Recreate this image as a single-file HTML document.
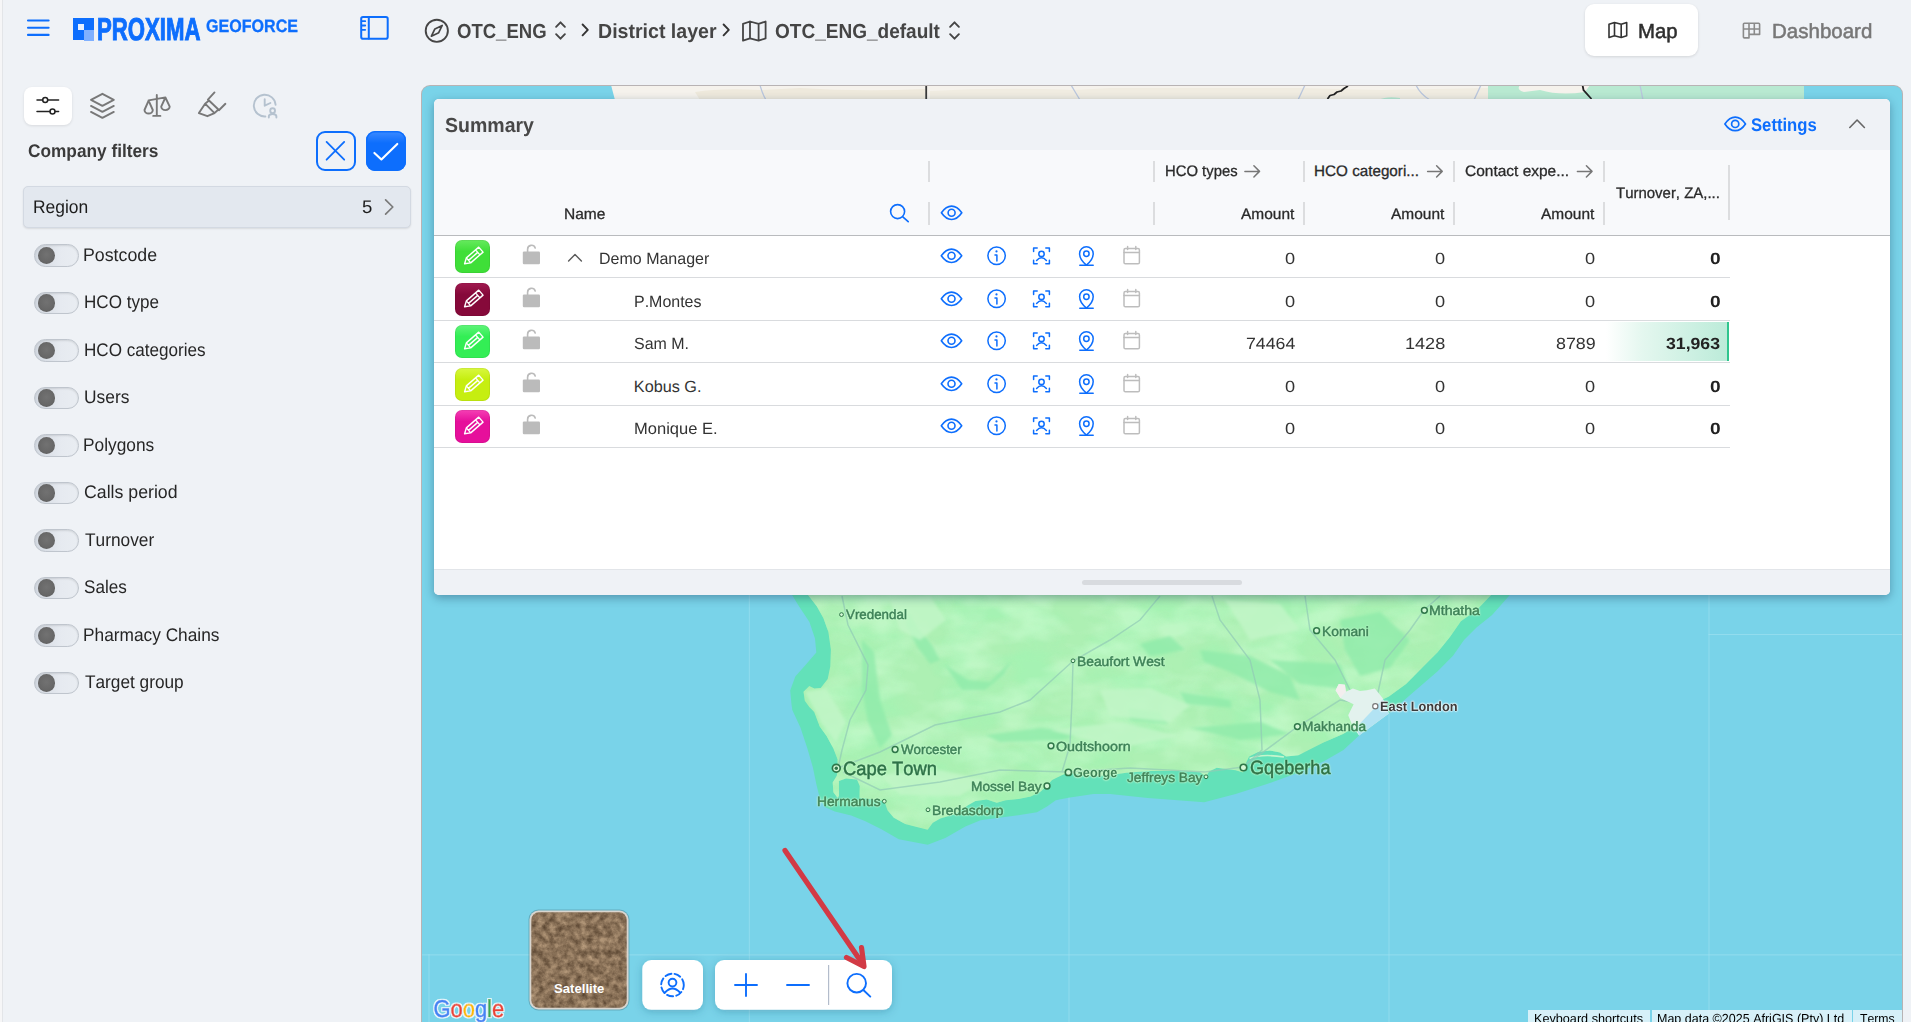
<!DOCTYPE html>
<html lang="en"><head><meta charset="utf-8"><title>Proxima GeoForce</title>
<style>
html,body{margin:0;padding:0}
body{width:1911px;height:1022px;overflow:hidden;background:#eff2f6;font-family:"Liberation Sans",sans-serif;position:relative;color:#333}
.t{position:absolute;white-space:nowrap;line-height:0;color:#333;text-rendering:geometricPrecision;font-kerning:none;transform-origin:0 0}
.t::before{content:"";display:inline-block;width:0;height:100px}
.a{position:absolute}
svg{position:absolute;left:0;top:0;overflow:visible}
</style></head><body>

<div class="a" style="left:0;top:0;width:2px;height:1022px;background:#f6f6f7"></div>
<div class="a" style="left:2px;top:0;width:1px;height:1022px;background:#e3e5e8"></div>
<!-- header -->
<div class="a" style="left:73px;top:18.4px;width:21.2px;height:22.1px;background:#0d6efd"></div>
<div class="a" style="left:78.2px;top:24px;width:5.7px;height:5.6px;background:#e9f1ff"></div>
<div class="a" style="left:83.9px;top:30px;width:10.3px;height:10.5px;background:#7fb0ff"></div>
<div class="t" style="left:96.87px;top:-60px;font-size:31.70px;font-weight:700;transform:scaleX(0.7001);color:#0d6efd;-webkit-text-stroke:1.00px;">PROXIMA</div>
<div class="t" style="left:205.88px;top:-68px;font-size:17.90px;font-weight:700;transform:scaleX(0.8983);color:#0d6efd;-webkit-text-stroke:0.30px;">GEOFORCE</div>
<div class="t" style="left:456.74px;top:-62px;font-size:20.29px;font-weight:700;transform:scaleX(0.9136);color:#454545;">OTC_ENG</div>
<div class="t" style="left:597.89px;top:-62px;font-size:20.29px;font-weight:700;transform:scaleX(0.9648);color:#454545;">District layer</div>
<div class="t" style="left:774.62px;top:-62px;font-size:20.29px;font-weight:700;transform:scaleX(0.9382);color:#454545;">OTC_ENG_default</div>
<div class="a" style="left:1585px;top:4px;width:113px;height:52px;background:#fff;border-radius:9px;box-shadow:0 1px 3px rgba(0,0,0,.12)"></div>
<div class="t" style="left:1638.18px;top:-62px;font-size:20.29px;transform:scaleX(1.0039);color:#2e2e2e;-webkit-text-stroke:0.50px;">Map</div>
<div class="t" style="left:1772.07px;top:-62px;font-size:20.29px;transform:scaleX(1.0115);color:#777;-webkit-text-stroke:0.50px;">Dashboard</div>
<!-- left panel -->
<div class="a" style="left:24px;top:86.5px;width:48px;height:38.5px;background:#fff;border-radius:8px;box-shadow:0 1px 3px rgba(0,0,0,.10)"></div>
<div class="t" style="left:28.19px;top:57px;font-size:18.26px;font-weight:700;transform:scaleX(0.9457);color:#3a3a3a;">Company filters</div>
<div class="a" style="left:316px;top:131px;width:36px;height:36px;border:2px solid #0d6efd;border-radius:9px"></div>
<div class="a" style="left:366px;top:131px;width:40px;height:40px;background:linear-gradient(#3d8bff 0,#0d6efd 30%);border-radius:9px;box-shadow:inset 0 0 0 1.5px #0d6efd"></div>
<div class="a" style="left:23px;top:186px;width:388px;height:42.4px;background:#e3e8ef;border:1px solid #d3d9e2;border-radius:5px;box-sizing:border-box;box-shadow:0 1px 2px rgba(0,0,0,.10)"></div>
<div class="t" style="left:33.17px;top:113px;font-size:18.26px;transform:scaleX(0.9549);color:#1c1c1c;">Region</div>
<div class="t" style="left:361.66px;top:113px;font-size:18.26px;transform:scaleX(1.0164);color:#1c1c1c;">5</div>
<div class="a" style="left:34.2px;top:244.2px;width:44.7px;height:22.4px;border-radius:11.2px;box-sizing:border-box;border:1px solid #bfc5cd;background:linear-gradient(90deg,#d3d9e1 0,#e6eaf0 60%,#e9edf2 100%);box-shadow:inset 0 1px 2px rgba(0,0,0,.10)"></div>
<div class="a" style="left:37.9px;top:246.7px;width:17.4px;height:17.4px;border-radius:9px;background:radial-gradient(circle at 50% 45%,#727272 0,#676767 60%,#555 100%)"></div>
<div class="t" style="left:83.44px;top:161px;font-size:18.26px;transform:scaleX(0.9725);color:#262626;">Postcode</div>
<div class="a" style="left:34.2px;top:291.7px;width:44.7px;height:22.4px;border-radius:11.2px;box-sizing:border-box;border:1px solid #bfc5cd;background:linear-gradient(90deg,#d3d9e1 0,#e6eaf0 60%,#e9edf2 100%);box-shadow:inset 0 1px 2px rgba(0,0,0,.10)"></div>
<div class="a" style="left:37.9px;top:294.2px;width:17.4px;height:17.4px;border-radius:9px;background:radial-gradient(circle at 50% 45%,#727272 0,#676767 60%,#555 100%)"></div>
<div class="t" style="left:83.50px;top:208px;font-size:18.26px;transform:scaleX(0.9350);color:#262626;">HCO type</div>
<div class="a" style="left:34.2px;top:339.2px;width:44.7px;height:22.4px;border-radius:11.2px;box-sizing:border-box;border:1px solid #bfc5cd;background:linear-gradient(90deg,#d3d9e1 0,#e6eaf0 60%,#e9edf2 100%);box-shadow:inset 0 1px 2px rgba(0,0,0,.10)"></div>
<div class="a" style="left:37.9px;top:341.7px;width:17.4px;height:17.4px;border-radius:9px;background:radial-gradient(circle at 50% 45%,#727272 0,#676767 60%,#555 100%)"></div>
<div class="t" style="left:83.50px;top:256px;font-size:18.26px;transform:scaleX(0.9370);color:#262626;">HCO categories</div>
<div class="a" style="left:34.2px;top:386.7px;width:44.7px;height:22.4px;border-radius:11.2px;box-sizing:border-box;border:1px solid #bfc5cd;background:linear-gradient(90deg,#d3d9e1 0,#e6eaf0 60%,#e9edf2 100%);box-shadow:inset 0 1px 2px rgba(0,0,0,.10)"></div>
<div class="a" style="left:37.9px;top:389.2px;width:17.4px;height:17.4px;border-radius:9px;background:radial-gradient(circle at 50% 45%,#727272 0,#676767 60%,#555 100%)"></div>
<div class="t" style="left:83.56px;top:303px;font-size:18.26px;transform:scaleX(0.9514);color:#262626;">Users</div>
<div class="a" style="left:34.2px;top:434.2px;width:44.7px;height:22.4px;border-radius:11.2px;box-sizing:border-box;border:1px solid #bfc5cd;background:linear-gradient(90deg,#d3d9e1 0,#e6eaf0 60%,#e9edf2 100%);box-shadow:inset 0 1px 2px rgba(0,0,0,.10)"></div>
<div class="a" style="left:37.9px;top:436.7px;width:17.4px;height:17.4px;border-radius:9px;background:radial-gradient(circle at 50% 45%,#727272 0,#676767 60%,#555 100%)"></div>
<div class="t" style="left:83.48px;top:351px;font-size:18.26px;transform:scaleX(0.9484);color:#262626;">Polygons</div>
<div class="a" style="left:34.2px;top:481.7px;width:44.7px;height:22.4px;border-radius:11.2px;box-sizing:border-box;border:1px solid #bfc5cd;background:linear-gradient(90deg,#d3d9e1 0,#e6eaf0 60%,#e9edf2 100%);box-shadow:inset 0 1px 2px rgba(0,0,0,.10)"></div>
<div class="a" style="left:37.9px;top:484.2px;width:17.4px;height:17.4px;border-radius:9px;background:radial-gradient(circle at 50% 45%,#727272 0,#676767 60%,#555 100%)"></div>
<div class="t" style="left:84.00px;top:398px;font-size:18.26px;transform:scaleX(0.9711);color:#262626;">Calls period</div>
<div class="a" style="left:34.2px;top:529.2px;width:44.7px;height:22.4px;border-radius:11.2px;box-sizing:border-box;border:1px solid #bfc5cd;background:linear-gradient(90deg,#d3d9e1 0,#e6eaf0 60%,#e9edf2 100%);box-shadow:inset 0 1px 2px rgba(0,0,0,.10)"></div>
<div class="a" style="left:37.9px;top:531.7px;width:17.4px;height:17.4px;border-radius:9px;background:radial-gradient(circle at 50% 45%,#727272 0,#676767 60%,#555 100%)"></div>
<div class="t" style="left:84.51px;top:446px;font-size:18.26px;transform:scaleX(0.9467);color:#262626;">Turnover</div>
<div class="a" style="left:34.2px;top:576.7px;width:44.7px;height:22.4px;border-radius:11.2px;box-sizing:border-box;border:1px solid #bfc5cd;background:linear-gradient(90deg,#d3d9e1 0,#e6eaf0 60%,#e9edf2 100%);box-shadow:inset 0 1px 2px rgba(0,0,0,.10)"></div>
<div class="a" style="left:37.9px;top:579.2px;width:17.4px;height:17.4px;border-radius:9px;background:radial-gradient(circle at 50% 45%,#727272 0,#676767 60%,#555 100%)"></div>
<div class="t" style="left:84.12px;top:493px;font-size:18.26px;transform:scaleX(0.9368);color:#262626;">Sales</div>
<div class="a" style="left:34.2px;top:624.2px;width:44.7px;height:22.4px;border-radius:11.2px;box-sizing:border-box;border:1px solid #bfc5cd;background:linear-gradient(90deg,#d3d9e1 0,#e6eaf0 60%,#e9edf2 100%);box-shadow:inset 0 1px 2px rgba(0,0,0,.10)"></div>
<div class="a" style="left:37.9px;top:626.7px;width:17.4px;height:17.4px;border-radius:9px;background:radial-gradient(circle at 50% 45%,#727272 0,#676767 60%,#555 100%)"></div>
<div class="t" style="left:83.48px;top:541px;font-size:18.26px;transform:scaleX(0.9474);color:#262626;">Pharmacy Chains</div>
<div class="a" style="left:34.2px;top:671.7px;width:44.7px;height:22.4px;border-radius:11.2px;box-sizing:border-box;border:1px solid #bfc5cd;background:linear-gradient(90deg,#d3d9e1 0,#e6eaf0 60%,#e9edf2 100%);box-shadow:inset 0 1px 2px rgba(0,0,0,.10)"></div>
<div class="a" style="left:37.9px;top:674.2px;width:17.4px;height:17.4px;border-radius:9px;background:radial-gradient(circle at 50% 45%,#727272 0,#676767 60%,#555 100%)"></div>
<div class="t" style="left:84.51px;top:588px;font-size:18.26px;transform:scaleX(0.9441);color:#262626;">Target group</div><!-- map -->
<div class="a" style="left:422px;top:86px;width:1480px;height:936px;border-radius:8px 8px 0 0;overflow:hidden;background:#79d3e9;box-shadow:0 0 0 1px #b8b3b4">
<svg width="1480" height="936" viewBox="422 86 1480 936">
<defs><filter id="sat" x="0" y="0" width="100%" height="100%" color-interpolation-filters="sRGB"><feTurbulence type="fractalNoise" baseFrequency="0.16" numOctaves="4" seed="7"/><feColorMatrix type="matrix" values="0.5 0 0 0 0.29  0.46 0 0 0 0.215  0.4 0 0 0 0.145  0 0 0 0 1"/></filter></defs>
<rect x="428.5" y="954.0" width="1" height="68.0" fill="#a4e2f1" opacity=".6"/>
<rect x="748.8" y="595.0" width="1" height="427.0" fill="#a4e2f1" opacity=".6"/>
<rect x="1068.5" y="790.0" width="1" height="232.0" fill="#a4e2f1" opacity=".6"/>
<rect x="1388.5" y="712.0" width="1" height="310.0" fill="#a4e2f1" opacity=".6"/>
<rect x="1708.5" y="595.0" width="1" height="427.0" fill="#a4e2f1" opacity=".6"/>
<rect x="1708.5" y="634.0" width="194.5" height="1" fill="#a4e2f1" opacity=".6"/>
<rect x="421.0" y="954.4" width="1482.0" height="1" fill="#a4e2f1" opacity=".6"/>
<polygon points="611,85 1804,85 1804,100 615,100" fill="#f5f2ec"/>
<path d="M695 92 Q720 88 760 90 L800 88 Q860 92 925 89 L925 100 L700 100 Z" fill="#eee9dc"/>
<path d="M930 91 Q1000 87 1075 90 L1110 88 L1300 88 L1380 90 L1488 88 L1488 100 L930 100 Z" fill="#f0ece1"/>
<path d="M1488 85 L1520 85 Q1516 90 1524 92 L1540 90 Q1560 96 1585 92 L1590 85 L1804 85 L1804 100 L1488 100 Z" fill="#b8e9d1"/>
<path d="M1379 100 Q1386 96 1400 98 L1400 100 Z" fill="#b8e9d1"/>
<g fill="none" stroke="#b9c6dd" stroke-width="1.3"><path d="M760 85 Q762 93 766 100"/><path d="M1071 85 L1080 100"/><path d="M1305 85 L1298 100"/><path d="M1416 85 Q1420 94 1430 100"/><path d="M1481 85 L1474 100"/><path d="M1640 85 L1643 100"/></g>
<rect x="925.3" y="85" width="1.8" height="15" fill="#3a3a3a"/>
<path d="M1582.5 85 L1583.5 90 L1591.5 99" stroke="#222" stroke-width="1.8" fill="none"/>
<path d="M1327.5 99 L1330 95.5 L1334 94.5 L1337 92 L1341 91 L1344 88.5 L1348 86" stroke="#222" stroke-width="1.8" fill="none" stroke-linejoin="round"/>
<polygon points="786.0,586.0 792.1,595.1 799.1,606.5 809.3,621.8 815.0,638.4 816.3,652.4 805.5,665.1 795.3,676.5 790.2,690.5 791.5,704.5 792.3,710.0 800.5,727.8 807.4,748.4 812.9,767.5 816.3,784.0 819.7,797.7 825.2,807.3 834.8,811.4 851.2,815.5 864.9,821.0 881.4,829.2 898.8,839.2 927.7,844.8 945.3,837.9 965.4,826.6 980.5,820.3 999.3,817.8 1018.2,815.3 1037.0,812.2 1047.0,806.5 1055.8,800.2 1068.4,797.7 1093.5,794.0 1110.0,794.1 1147.7,797.9 1204.2,802.3 1235.6,794.1 1267.0,784.1 1298.4,772.7 1323.5,761.4 1343.5,750.0 1359.1,735.5 1388.9,713.6 1413.9,691.7 1437.4,671.4 1453.0,655.7 1464.0,640.1 1476.5,627.6 1492.1,615.0 1509.4,595.5 1517.0,586.0" fill="#63e1b9"/>
<polygon points="802.0,586.0 808.0,595.1 816.9,606.5 823.3,618.0 828.4,632.0 830.9,649.8 830.3,666.4 827.7,679.1 820.7,688.0 814.4,688.6 809.3,686.1 803.5,691.8 804.8,700.7 809.3,707.1 814.2,712.0 819.7,726.4 826.6,736.0 833.4,748.4 837.5,759.3 837.6,770.0 836.8,775.8 832.7,782.6 833.4,792.2 837.5,797.7 839.0,796.0 838.9,781.0 846.0,778.6 857.0,779.4 859.8,786.0 859.5,797.7 872.0,799.5 884.4,801.3 887.5,810.3 893.8,817.8 905.1,824.1 927.7,829.7 932.8,822.8 940.3,818.4 955.4,814.0 967.9,805.3 975.4,800.9 986.8,799.6 996.8,802.7 1005.6,800.2 1018.2,799.0 1030.7,796.5 1040.8,791.4 1047.0,785.8 1052.0,780.1 1062.1,775.1 1068.4,772.6 1080.0,774.5 1093.5,776.0 1110.0,775.3 1126.3,772.7 1150.0,771.0 1180.0,771.0 1200.0,772.2 1206.0,776.6 1209.0,771.5 1216.8,767.7 1235.6,770.2 1243.1,772.5 1246.0,763.0 1249.0,756.5 1258.0,752.0 1270.0,750.5 1280.0,752.5 1286.0,756.6 1298.4,755.2 1323.5,742.6 1343.0,734.0 1359.1,724.6 1382.6,699.5 1388.9,696.4 1406.1,683.9 1421.7,668.2 1437.4,652.6 1449.9,636.9 1460.9,621.3 1476.5,610.3 1490.6,595.5 1498.0,586.0" fill="#adf0b3"/>
<path d="M1249.5 758.5 Q1262 753.5 1284 757" stroke="#c4f5cc" stroke-width="1.6" fill="none"/>
<clipPath id="landclip"><polygon points="802.0,586.0 808.0,595.1 816.9,606.5 823.3,618.0 828.4,632.0 830.9,649.8 830.3,666.4 827.7,679.1 820.7,688.0 814.4,688.6 809.3,686.1 803.5,691.8 804.8,700.7 809.3,707.1 814.2,712.0 819.7,726.4 826.6,736.0 833.4,748.4 837.5,759.3 837.6,770.0 836.8,775.8 832.7,782.6 833.4,792.2 837.5,797.7 839.0,796.0 838.9,781.0 846.0,778.6 857.0,779.4 859.8,786.0 859.5,797.7 872.0,799.5 884.4,801.3 887.5,810.3 893.8,817.8 905.1,824.1 927.7,829.7 932.8,822.8 940.3,818.4 955.4,814.0 967.9,805.3 975.4,800.9 986.8,799.6 996.8,802.7 1005.6,800.2 1018.2,799.0 1030.7,796.5 1040.8,791.4 1047.0,785.8 1052.0,780.1 1062.1,775.1 1068.4,772.6 1080.0,774.5 1093.5,776.0 1110.0,775.3 1126.3,772.7 1150.0,771.0 1180.0,771.0 1200.0,772.2 1206.0,776.6 1209.0,771.5 1216.8,767.7 1235.6,770.2 1243.1,772.5 1246.0,763.0 1249.0,756.5 1258.0,752.0 1270.0,750.5 1280.0,752.5 1286.0,756.6 1298.4,755.2 1323.5,742.6 1343.0,734.0 1359.1,724.6 1382.6,699.5 1388.9,696.4 1406.1,683.9 1421.7,668.2 1437.4,652.6 1449.9,636.9 1460.9,621.3 1476.5,610.3 1490.6,595.5 1498.0,586.0"/></clipPath>
<filter id="terr" x="0" y="0" width="100%" height="100%" color-interpolation-filters="sRGB"><feTurbulence type="fractalNoise" baseFrequency="0.018 0.032" numOctaves="3" seed="11"/><feColorMatrix type="matrix" values="0 0 0 0 0.62  0 0 0 0 0.96  0 0 0 0 0.70  2.6 0 0 0 -0.95"/></filter>
<filter id="terr2" x="0" y="0" width="100%" height="100%" color-interpolation-filters="sRGB"><feTurbulence type="fractalNoise" baseFrequency="0.02 0.036" numOctaves="3" seed="29"/><feColorMatrix type="matrix" values="0 0 0 0 0.80  0 0 0 0 0.99  0 0 0 0 0.82  2.6 0 0 0 -1.0"/></filter>
<g clip-path="url(#landclip)"><rect x="780" y="586" width="740" height="270" filter="url(#terr)" opacity=".55"/><rect x="780" y="586" width="740" height="270" filter="url(#terr2)" opacity=".6"/></g>
<filter id="bl" x="-10%" y="-10%" width="120%" height="120%"><feGaussianBlur stdDeviation="1.6"/></filter>
<g clip-path="url(#landclip)"><g filter="url(#bl)">
<g fill="#8fecaa" opacity=".8"><path d="M908 610 L918 628 L932 645 L940 660 L930 664 L918 648 L906 626 Z"/><path d="M944 664 L968 680 L990 682 L1012 660 L1004 674 L985 690 L962 690 Z"/><path d="M862 640 L874 652 L880 700 L892 735 L880 748 L868 722 L862 690 Z"/><path d="M985 735 L1040 728 L1090 732 L1060 740 L1000 742 Z"/><path d="M1128 708 L1160 712 L1168 724 L1130 720 Z"/><path d="M1180 692 L1230 700 L1232 708 L1186 704 Z"/><path d="M1200 650 L1250 656 L1290 676 L1300 700 L1270 692 L1230 672 L1204 662 Z"/><path d="M1140 644 L1170 636 L1185 650 L1150 656 Z"/><path d="M1270 660 L1340 664 L1350 690 L1300 684 Z"/><path d="M1190 728 L1260 722 L1290 734 L1240 740 Z"/><path d="M1340 620 L1380 612 L1410 640 L1390 668 L1360 676 L1345 650 Z"/></g>
<g fill="#c4f7c8" opacity=".8"><path d="M805 692 L826 688 L834 702 L846 722 L836 742 L822 724 Z"/><path d="M880 775 L940 770 L985 780 L960 796 L900 795 Z"/><path d="M1100 690 L1150 688 L1190 705 L1170 722 L1110 716 Z"/><path d="M1050 730 L1120 722 L1180 736 L1120 748 Z"/><path d="M890 600 L930 596 L946 620 L920 640 L900 630 Z"/><path d="M1225 600 L1280 604 L1300 630 L1250 640 Z"/></g>
</g></g>
<g fill="none" stroke="#92cbb6" stroke-width="1.5" opacity=".7">
<path d="M842 596 L848 625 L868 665 L866 690 L850 720 L842 750 L838 768"/>
<path d="M838 768 L880 752 L935 725 L1000 712 L1030 700 L1073 661 L1110 640 L1140 620 L1160 596"/>
<path d="M1073 661 L1072 700 L1070 745 L1062 772"/>
<path d="M843 772 L880 790 L940 782 L1000 770 L1068 772 L1130 768 L1205 772 L1243 767"/>
<path d="M1243 767 L1262 750 L1260 700 L1250 660 L1220 620 L1212 596"/>
<path d="M1243 767 L1297 727 L1340 700 L1375 706"/>
<path d="M1305 596 L1310 630 L1335 660 L1350 690 L1375 706"/>
<path d="M1375 706 L1385 660 L1410 630 L1424 610 L1440 596"/>
</g>
<path d="M1335.6 690.2 L1338.8 683.9 L1345 684.7 L1345.8 691.7 L1352.9 688.6 L1360 691 L1366.9 690.2 L1374.8 688.6 L1382.6 698 L1388.9 713.6 L1359.1 735.5 L1353 727 L1348.2 715.2 L1353.6 704.2 L1346.6 701.1 L1340.3 698 Z" fill="#e3f2ee"/>
<path d="M1382.6 699.5 L1388.9 713.6 L1359.1 735.5 L1356.5 727.5 L1359.1 724.6 Z" fill="#b2e3f3"/>
<path d="M1335.6 690.2 L1338.8 683.9 L1345 684.7 L1345.8 691.7 L1340.3 698 Z" fill="#f3eeee"/>
<circle cx="841.5" cy="614.6" r="1.9" fill="#d3f8d6" stroke="#2f7649" stroke-width="1.0"/>
<circle cx="1073.0" cy="660.8" r="1.9" fill="#d3f8d6" stroke="#2f7649" stroke-width="1.0"/>
<circle cx="895.1" cy="749.5" r="2.9" fill="#d3f8d6" stroke="#2f7649" stroke-width="1.5"/>
<circle cx="836.3" cy="768.2" r="3.9" fill="#d3f8d6" stroke="#2f7649" stroke-width="1.7"/>
<circle cx="836.3" cy="768.2" r="1.7" fill="#2f7649"/>
<circle cx="884.3" cy="801.3" r="1.9" fill="#d3f8d6" stroke="#2f7649" stroke-width="1.0"/>
<circle cx="928.0" cy="809.8" r="1.9" fill="#d3f8d6" stroke="#2f7649" stroke-width="1.0"/>
<circle cx="1047.0" cy="786.0" r="2.9" fill="#d3f8d6" stroke="#2f7649" stroke-width="1.5"/>
<circle cx="1051.0" cy="745.8" r="2.9" fill="#d3f8d6" stroke="#2f7649" stroke-width="1.5"/>
<circle cx="1068.4" cy="772.4" r="3.1" fill="#d3f8d6" stroke="#2f7649" stroke-width="1.6"/>
<circle cx="1206.0" cy="776.8" r="1.9" fill="#d3f8d6" stroke="#2f7649" stroke-width="1.0"/>
<circle cx="1243.5" cy="767.5" r="3.3" fill="#d3f8d6" stroke="#2f7649" stroke-width="1.6"/>
<circle cx="1297.4" cy="726.6" r="2.9" fill="#d3f8d6" stroke="#2f7649" stroke-width="1.5"/>
<circle cx="1375.3" cy="706.2" r="2.6" fill="#fff" stroke="#777" stroke-width="1.2"/>
<circle cx="1316.6" cy="630.7" r="2.9" fill="#d3f8d6" stroke="#2f7649" stroke-width="1.5"/>
<circle cx="1424.4" cy="610.3" r="2.9" fill="#d3f8d6" stroke="#2f7649" stroke-width="1.5"/>
<rect x="528.5" y="909.5" width="101" height="101" rx="10" fill="#000" opacity=".18"/>
<rect x="529.5" y="910.5" width="99" height="99" rx="9" fill="#d9d6d0"/>
<g><clipPath id="sc"><rect x="531.3" y="912.3" width="95.4" height="95.4" rx="7.5"/></clipPath><rect clip-path="url(#sc)" x="531" y="912" width="96" height="96" filter="url(#sat)"/></g>
<text x="579.2" y="993" text-anchor="middle" font-size="13.6" font-weight="700" fill="#fff" textLength="50.2" lengthAdjust="spacingAndGlyphs" style="font-family:'Liberation Sans',sans-serif">Satellite</text>
<filter id="sh" x="-30%" y="-30%" width="160%" height="170%"><feDropShadow dx="0" dy="2" stdDeviation="4" flood-color="#1a4a6a" flood-opacity=".28"/></filter>
<rect x="642.3" y="960" width="60.7" height="49.8" rx="9" fill="#fff" filter="url(#sh)"/>
<rect x="715" y="960" width="177" height="49.8" rx="9" fill="#fff" filter="url(#sh)"/>
<rect x="828" y="965" width="1.2" height="40" fill="#b3bccb"/>
<g fill="none" stroke="#0d6efd" stroke-width="1.9" stroke-linecap="round">
<path d="M735 985 H757 M746 974 V996"/><path d="M787 985 H809"/>
<circle cx="856.7" cy="983.2" r="9.3"/><path d="M863.6 990.2 L870.3 996.6"/>
<circle cx="672.5" cy="985" r="11.3" stroke-dasharray="6.3 3.2" stroke-dashoffset="2"/>
<circle cx="672.5" cy="982.6" r="3.9"/><path d="M665 992.5 Q672.5 984.5 680 992.5"/>
</g>
<g fill="none" stroke="#d23a45" stroke-width="5.2" stroke-linecap="round" stroke-linejoin="round"><path d="M785 850.5 L862 963"/><path d="M846.5 957.5 L864 966.5 L861.5 947.5"/></g>
<linearGradient id="gg" gradientUnits="userSpaceOnUse" x1="433.4" y1="0" x2="504.2" y2="0"><stop offset="0.0000" stop-color="#4285f4"/><stop offset="0.2413" stop-color="#4285f4"/><stop offset="0.2413" stop-color="#ea4335"/><stop offset="0.4138" stop-color="#ea4335"/><stop offset="0.4138" stop-color="#fbbc05"/><stop offset="0.5862" stop-color="#fbbc05"/><stop offset="0.5862" stop-color="#4285f4"/><stop offset="0.7587" stop-color="#4285f4"/><stop offset="0.7587" stop-color="#34a853"/><stop offset="0.8275" stop-color="#34a853"/><stop offset="0.8275" stop-color="#ea4335"/><stop offset="1.0000" stop-color="#ea4335"/></linearGradient>
<filter id="gh" x="-5%" y="-20%" width="110%" height="140%"><feMorphology in="SourceAlpha" operator="dilate" radius="1.1" result="d"/><feGaussianBlur in="d" stdDeviation=".4" result="b"/><feFlood flood-color="#fff" flood-opacity=".85"/><feComposite in2="b" operator="in" result="h"/><feMerge><feMergeNode in="h"/><feMergeNode in="SourceGraphic"/></feMerge></filter>
<text x="433.4" y="1017" font-size="24.3" textLength="70.8" lengthAdjust="spacingAndGlyphs" fill="url(#gg)" stroke="url(#gg)" stroke-width=".6" filter="url(#gh)" text-rendering="geometricPrecision" style="font-family:'Liberation Sans',sans-serif">Google</text>
</svg>
<div class="t" style="left:424.37px;top:433px;font-size:13.40px;transform:scaleX(0.9969);color:#3d8257;-webkit-text-stroke:0.45px;text-shadow:0 0 1.2px #c9f8cf,0 0 1.2px #c9f8cf,0 0 2px #c9f8cf,0 0 2.5px #c9f8cf;">Vredendal</div>
<div class="t" style="left:654.50px;top:480px;font-size:13.40px;transform:scaleX(1.0326);color:#3d8257;-webkit-text-stroke:0.45px;text-shadow:0 0 1.2px #c9f8cf,0 0 1.2px #c9f8cf,0 0 2px #c9f8cf,0 0 2.5px #c9f8cf;">Beaufort West</div>
<div class="t" style="left:479.27px;top:568px;font-size:13.40px;transform:scaleX(0.9948);color:#3d8257;-webkit-text-stroke:0.45px;text-shadow:0 0 1.2px #c9f8cf,0 0 1.2px #c9f8cf,0 0 2px #c9f8cf,0 0 2.5px #c9f8cf;">Worcester</div>
<div class="t" style="left:420.81px;top:589px;font-size:19.20px;transform:scaleX(0.9579);color:#2d7247;-webkit-text-stroke:0.50px;text-shadow:0 0 1.2px #c9f8cf,0 0 1.2px #c9f8cf,0 0 2px #c9f8cf,0 0 2.5px #c9f8cf;">Cape Town</div>
<div class="t" style="left:394.90px;top:620px;font-size:13.40px;transform:scaleX(1.0284);color:#3d8257;-webkit-text-stroke:0.45px;text-shadow:0 0 1.2px #c9f8cf,0 0 1.2px #c9f8cf,0 0 2px #c9f8cf,0 0 2.5px #c9f8cf;">Hermanus</div>
<div class="t" style="left:509.50px;top:629px;font-size:13.40px;transform:scaleX(1.0299);color:#3d8257;-webkit-text-stroke:0.45px;text-shadow:0 0 1.2px #c9f8cf,0 0 1.2px #c9f8cf,0 0 2px #c9f8cf,0 0 2.5px #c9f8cf;">Bredasdorp</div>
<div class="t" style="left:549.11px;top:605px;font-size:13.40px;transform:scaleX(1.0207);color:#3d8257;-webkit-text-stroke:0.45px;text-shadow:0 0 1.2px #c9f8cf,0 0 1.2px #c9f8cf,0 0 2px #c9f8cf,0 0 2.5px #c9f8cf;">Mossel Bay</div>
<div class="t" style="left:634.36px;top:565px;font-size:13.40px;transform:scaleX(1.0657);color:#3d8257;-webkit-text-stroke:0.45px;text-shadow:0 0 1.2px #c9f8cf,0 0 1.2px #c9f8cf,0 0 2px #c9f8cf,0 0 2.5px #c9f8cf;">Oudtshoorn</div>
<div class="t" style="left:651.18px;top:591px;font-size:13.40px;font-weight:700;transform:scaleX(0.9476);color:#3d8257;text-shadow:0 0 1.2px #c9f8cf,0 0 1.2px #c9f8cf,0 0 2px #c9f8cf,0 0 2.5px #c9f8cf;">George</div>
<div class="t" style="left:704.62px;top:596px;font-size:13.40px;transform:scaleX(1.0238);color:#3d8257;-webkit-text-stroke:0.45px;text-shadow:0 0 1.2px #c9f8cf,0 0 1.2px #c9f8cf,0 0 2px #c9f8cf,0 0 2.5px #c9f8cf;">Jeffreys Bay</div>
<div class="t" style="left:827.53px;top:588px;font-size:19.20px;transform:scaleX(0.9431);color:#2d7247;-webkit-text-stroke:0.50px;text-shadow:0 0 1.2px #c9f8cf,0 0 1.2px #c9f8cf,0 0 2px #c9f8cf,0 0 2.5px #c9f8cf;">Gqeberha</div>
<div class="t" style="left:880.30px;top:545px;font-size:13.40px;transform:scaleX(1.0238);color:#3d8257;-webkit-text-stroke:0.45px;text-shadow:0 0 1.2px #c9f8cf,0 0 1.2px #c9f8cf,0 0 2px #c9f8cf,0 0 2.5px #c9f8cf;">Makhanda</div>
<div class="t" style="left:958.14px;top:525px;font-size:13.40px;font-weight:700;transform:scaleX(0.9570);color:#3c3c3c;text-shadow:0 0 1.2px #ffffff,0 0 1.2px #ffffff,0 0 2px #ffffff,0 0 2.5px #ffffff;">East London</div>
<div class="t" style="left:899.80px;top:450px;font-size:13.40px;transform:scaleX(1.0323);color:#3d8257;-webkit-text-stroke:0.45px;text-shadow:0 0 1.2px #c9f8cf,0 0 1.2px #c9f8cf,0 0 2px #c9f8cf,0 0 2.5px #c9f8cf;">Komani</div>
<div class="t" style="left:1006.98px;top:429px;font-size:13.40px;transform:scaleX(1.0530);color:#3d8257;-webkit-text-stroke:0.45px;text-shadow:0 0 1.2px #c9f8cf,0 0 1.2px #c9f8cf,0 0 2px #c9f8cf,0 0 2.5px #c9f8cf;">Mthatha</div>
<div class="a" style="left:1106.0px;top:924px;height:12px;width:122.0px;background:rgba(245,250,252,.75)"></div>
<div class="a" style="left:1230.0px;top:924px;height:12px;width:199.6px;background:rgba(245,250,252,.75)"></div>
<div class="a" style="left:1431.0px;top:924px;height:12px;width:49.0px;background:rgba(245,250,252,.75)"></div>
<div class="t" style="left:1111.76px;top:837px;font-size:13.20px;transform:scaleX(0.9593);color:#000;">Keyboard shortcuts</div>
<div class="t" style="left:1235.47px;top:837px;font-size:13.20px;transform:scaleX(0.9483);color:#000;">Map data ©2025 AfriGIS (Pty) Ltd</div>
<div class="t" style="left:1437.72px;top:837px;font-size:13.20px;transform:scaleX(0.9284);color:#000;">Terms</div>
</div><!-- summary panel -->
<div class="a" style="left:434px;top:99px;width:1456px;height:496px;border-radius:5px;background:#fff;box-shadow:0 3px 10px rgba(20,50,80,.38);overflow:hidden">
<div class="a" style="left:0;top:0;width:1456px;height:51px;background:#eff2f6"></div>
<div class="a" style="left:0;top:51px;width:1456px;height:85px;background:#f8f9fb;border-bottom:1.5px solid #b9bbbe"></div>
<div class="a" style="left:0;top:470px;width:1456px;height:26px;background:#eff2f6;border-top:1px solid #e2e5e9"></div>
<div class="a" style="left:648px;top:481px;width:159.5px;height:5px;border-radius:3px;background:#d8dbdf"></div>
<div class="a" style="left:0;top:178.0px;width:1296px;height:1px;background:#d9dbde"></div>
<div class="a" style="left:0;top:220.5px;width:1296px;height:1px;background:#d9dbde"></div>
<div class="a" style="left:0;top:263.0px;width:1296px;height:1px;background:#d9dbde"></div>
<div class="a" style="left:0;top:305.5px;width:1296px;height:1px;background:#d9dbde"></div>
<div class="a" style="left:0;top:348.0px;width:1296px;height:1px;background:#d9dbde"></div>
<div class="a" style="left:1172px;top:223px;width:123px;height:38.5px;background:linear-gradient(90deg,#ffffff 0,#e4f7ef 30%,#bcebd9 100%);border-right:2px solid #30c58e;box-sizing:border-box"></div>
<div class="a" style="left:494.2px;top:61.6px;width:1.6px;height:21.4px;background:#dcdddf"></div>
<div class="a" style="left:494.2px;top:103.3px;width:1.6px;height:22.3px;background:#dcdddf"></div>
<div class="a" style="left:719.2px;top:61.6px;width:1.6px;height:21.4px;background:#dcdddf"></div>
<div class="a" style="left:719.2px;top:103.3px;width:1.6px;height:22.3px;background:#dcdddf"></div>
<div class="a" style="left:869.2px;top:61.6px;width:1.6px;height:21.4px;background:#dcdddf"></div>
<div class="a" style="left:869.2px;top:103.3px;width:1.6px;height:22.3px;background:#dcdddf"></div>
<div class="a" style="left:1019.2px;top:61.6px;width:1.6px;height:21.4px;background:#dcdddf"></div>
<div class="a" style="left:1019.2px;top:103.3px;width:1.6px;height:22.3px;background:#dcdddf"></div>
<div class="a" style="left:1169.2px;top:61.6px;width:1.6px;height:21.4px;background:#dcdddf"></div>
<div class="a" style="left:1169.2px;top:103.3px;width:1.6px;height:22.3px;background:#dcdddf"></div>
<div class="a" style="left:1294.2px;top:66.0px;width:1.6px;height:54.6px;background:#dcdddf"></div>
<div class="a" style="left:21px;top:140.9px;width:35px;height:33px;border-radius:7px;background:linear-gradient(#66ea5e 0,#3fdf38 35%);box-shadow:inset 0 0 0 1px rgba(0,0,0,.06)"></div>
<div class="a" style="left:21px;top:183.9px;width:35px;height:33px;border-radius:7px;background:linear-gradient(#a11a50 0,#86093a 35%);box-shadow:inset 0 0 0 1px rgba(0,0,0,.06)"></div>
<div class="a" style="left:21px;top:225.9px;width:35px;height:33px;border-radius:7px;background:linear-gradient(#60f47a 0,#33ee55 35%);box-shadow:inset 0 0 0 1px rgba(0,0,0,.06)"></div>
<div class="a" style="left:21px;top:268.9px;width:35px;height:33px;border-radius:7px;background:linear-gradient(#d8f840 0,#c6ee10 35%);box-shadow:inset 0 0 0 1px rgba(0,0,0,.06)"></div>
<div class="a" style="left:21px;top:310.9px;width:35px;height:33px;border-radius:7px;background:linear-gradient(#f53fb4 0,#e60f9b 35%);box-shadow:inset 0 0 0 1px rgba(0,0,0,.06)"></div>
</div>
<div class="t" style="left:445.14px;top:32px;font-size:20.29px;font-weight:700;transform:scaleX(0.9620);color:#484848;">Summary</div>
<div class="t" style="left:1751.22px;top:31px;font-size:18.26px;font-weight:700;transform:scaleX(0.9129);color:#0d6efd;">Settings</div>
<div class="t" style="left:564.48px;top:119px;font-size:15.22px;transform:scaleX(1.0213);color:#2a2a2a;-webkit-text-stroke:0.30px;">Name</div>
<div class="t" style="left:1164.53px;top:76px;font-size:15.22px;transform:scaleX(0.9750);color:#2a2a2a;-webkit-text-stroke:0.30px;">HCO types</div>
<div class="t" style="left:1314.10px;top:76px;font-size:15.22px;color:#2a2a2a;-webkit-text-stroke:0.30px;">HCO categori...</div>
<div class="t" style="left:1464.77px;top:76px;font-size:15.22px;transform:scaleX(1.0170);color:#2a2a2a;-webkit-text-stroke:0.30px;">Contact expe...</div>
<div class="t" style="left:1615.61px;top:98px;font-size:15.22px;transform:scaleX(0.9830);color:#2a2a2a;-webkit-text-stroke:0.30px;">Turnover, ZA,...</div>
<div class="t" style="left:1241.12px;top:119px;font-size:15.22px;transform:scaleX(1.0170);color:#2a2a2a;-webkit-text-stroke:0.30px;">Amount</div>
<div class="t" style="left:1391.12px;top:119px;font-size:15.22px;transform:scaleX(1.0170);color:#2a2a2a;-webkit-text-stroke:0.30px;">Amount</div>
<div class="t" style="left:1541.12px;top:119px;font-size:15.22px;transform:scaleX(1.0170);color:#2a2a2a;-webkit-text-stroke:0.30px;">Amount</div>
<div class="t" style="left:599.49px;top:164px;font-size:16.23px;transform:scaleX(0.9866);color:#333;">Demo Manager</div>
<div class="t" style="left:1285.09px;top:164px;font-size:16.23px;transform:scaleX(1.1212);color:#333;">0</div>
<div class="t" style="left:1435.09px;top:164px;font-size:16.23px;transform:scaleX(1.1212);color:#333;">0</div>
<div class="t" style="left:1585.29px;top:164px;font-size:16.23px;transform:scaleX(1.1212);color:#333;">0</div>
<div class="t" style="left:1709.94px;top:164px;font-size:16.23px;font-weight:700;transform:scaleX(1.1788);color:#222;">0</div>
<div class="t" style="left:633.89px;top:207px;font-size:16.23px;transform:scaleX(0.9842);color:#333;">P.Montes</div>
<div class="t" style="left:1285.09px;top:207px;font-size:16.23px;transform:scaleX(1.1212);color:#333;">0</div>
<div class="t" style="left:1435.09px;top:207px;font-size:16.23px;transform:scaleX(1.1212);color:#333;">0</div>
<div class="t" style="left:1585.29px;top:207px;font-size:16.23px;transform:scaleX(1.1212);color:#333;">0</div>
<div class="t" style="left:1709.94px;top:207px;font-size:16.23px;font-weight:700;transform:scaleX(1.1788);color:#222;">0</div>
<div class="t" style="left:634.48px;top:249px;font-size:16.23px;transform:scaleX(0.9833);color:#333;">Sam M.</div>
<div class="t" style="left:1245.69px;top:249px;font-size:16.23px;transform:scaleX(1.0928);color:#333;">74464</div>
<div class="t" style="left:1405.02px;top:249px;font-size:16.23px;transform:scaleX(1.1150);color:#333;">1428</div>
<div class="t" style="left:1555.82px;top:249px;font-size:16.23px;transform:scaleX(1.1000);color:#333;">8789</div>
<div class="t" style="left:1666.39px;top:249px;font-size:16.23px;font-weight:700;transform:scaleX(1.0885);color:#222;">31,963</div>
<div class="t" style="left:633.87px;top:292px;font-size:16.23px;color:#333;">Kobus G.</div>
<div class="t" style="left:1285.09px;top:292px;font-size:16.23px;transform:scaleX(1.1212);color:#333;">0</div>
<div class="t" style="left:1435.09px;top:292px;font-size:16.23px;transform:scaleX(1.1212);color:#333;">0</div>
<div class="t" style="left:1585.29px;top:292px;font-size:16.23px;transform:scaleX(1.1212);color:#333;">0</div>
<div class="t" style="left:1709.94px;top:292px;font-size:16.23px;font-weight:700;transform:scaleX(1.1788);color:#222;">0</div>
<div class="t" style="left:633.84px;top:334px;font-size:16.23px;transform:scaleX(1.0189);color:#333;">Monique E.</div>
<div class="t" style="left:1285.09px;top:334px;font-size:16.23px;transform:scaleX(1.1212);color:#333;">0</div>
<div class="t" style="left:1435.09px;top:334px;font-size:16.23px;transform:scaleX(1.1212);color:#333;">0</div>
<div class="t" style="left:1585.29px;top:334px;font-size:16.23px;transform:scaleX(1.1212);color:#333;">0</div>
<div class="t" style="left:1709.94px;top:334px;font-size:16.23px;font-weight:700;transform:scaleX(1.1788);color:#222;">0</div><!-- icons overlay -->
<svg width="1911" height="1022" viewBox="0 0 1911 1022" fill="none" stroke-linecap="round" stroke-linejoin="round">
<g stroke="#0d6efd" stroke-width="2.1"><path d="M28 20.5 H48.6 M28 27.7 H48.6 M28 34.9 H48.6"/></g>
<g stroke="#0d6efd" stroke-width="2"><rect x="361.2" y="16.9" width="26.5" height="21.8" rx="1.8"/><path d="M368.8 17 V38.6"/><path d="M362.2 21.2 H365.2 M362.2 25.5 H365.2 M362.2 29.8 H365.2" stroke-width="1.8"/></g>
<g stroke="#454545" stroke-width="1.9"><circle cx="436.8" cy="30.8" r="11.1"/><path d="M431.4 36.2 L434.9 28.9 L442.2 25.4 L438.7 32.7 Z" stroke-width="1.7"/></g>
<g stroke="#454545" stroke-width="1.9"><path d="M556.1 26.8 L560.5 22.3 L564.9 26.8 M556.1 34.2 L560.5 38.7 L564.9 34.2"/></g>
<g stroke="#454545" stroke-width="1.9"><path d="M950.1 26.8 L954.5 22.3 L958.9 26.8 M950.1 34.2 L954.5 38.7 L958.9 34.2"/></g>
<path stroke="#333" stroke-width="1.9" d="M582.6 24.5 L587.8 29.9 L582.6 35.3"/>
<path stroke="#333" stroke-width="1.9" d="M723.6 24.5 L728.8 29.9 L723.6 35.3"/>
<path stroke="#454545" stroke-width="1.8" d="M743.0 23.8 L750.0 21.5 L758.6 23.8 L765.6 21.5 V38.4 L758.6 40.7 L750.0 38.4 L743.0 40.7 Z M750.0 21.5 V38.4 M758.6 23.8 V40.7"/>
<path stroke="#333" stroke-width="1.6" d="M1609.0 24.3 L1614.5 22.5 L1621.2 24.3 L1626.7 22.5 V35.7 L1621.2 37.5 L1614.5 35.7 L1609.0 37.5 Z M1614.5 22.5 V35.7 M1621.2 24.3 V37.5"/>
<g stroke="#8a8a8a" stroke-width="1.6"><path d="M1743.4 24.2 a1 1 0 0 1 1 -1 H1758.6 a1 1 0 0 1 1 1 V34.4 H1749 V37.9 H1744.4 a1 1 0 0 1 -1 -1 Z M1749 23.4 V34.4 M1754.3 23.4 V34.4 M1743.4 29 H1759.6"/></g>
<g stroke="#222" stroke-width="1.5"><path d="M37 100.1 H42.6 M47.8 100.1 H58.6 M37 111.5 H49.9 M55.1 111.5 H58.6"/><circle cx="45.2" cy="100.1" r="2.5"/><circle cx="52.5" cy="111.5" r="2.5"/></g>
<g stroke="#787878" stroke-width="1.9"><path d="M102.4 93.8 L113.8 99.8 L102.4 105.8 L91 99.8 Z M91 105.9 L102.4 111.9 L113.8 105.9 M91 111.9 L102.4 117.9 L113.8 111.9"/>
<path d="M156.8 95 V115.8 M153.2 115.9 H160.4 M148.6 100.4 L165.4 97.4 M148.6 100.6 L144.5 110 a4.15 3.5 0 0 0 8.3 0 Z M165.4 97.5 L161.2 106.6 a4.25 3.5 0 0 0 8.5 0 Z"/>
<path d="M214.5 92.4 L207.9 99.6 M209 100.5 L218.4 109.5 L214.5 113.1 L205.1 103.7 Z M205.1 103.7 L198.9 113.1 L207.4 116.2 L214.5 113.1 M218.9 110.2 L225.4 103.8"/></g>
<g stroke="#b5c2cf" stroke-width="1.9"><path d="M265.4 116.5 A10.9 10.9 0 1 1 275.6 104.8"/><path d="M264.7 99.2 V105.7 L270.4 103"/><circle cx="272.6" cy="110.7" r="2.4"/><path d="M268.8 117.5 V116.6 a3.8 2.6 0 0 1 7.6 0 V117.5"/></g>
<path stroke="#0d6efd" stroke-width="1.8" d="M326.6 141.9 L344.2 159.7 M344.2 141.9 L326.6 159.7"/>
<path stroke="#fff" stroke-width="2.1" d="M374.4 152.9 L381.4 159.5 L397.3 143.9"/>
<path stroke="#7a7a7a" stroke-width="1.7" d="M385.6 199.8 L392.8 207 L385.6 214.2"/>
<g stroke="#0d6efd" stroke-width="1.7"><path d="M1724.9 123.9 Q1729.5 117.1 1735.2 117.1 Q1740.9 117.1 1745.5 123.9 Q1740.9 130.7 1735.2 130.7 Q1729.5 130.7 1724.9 123.9 Z"/><circle cx="1735.2" cy="123.9" r="3.6"/></g>
<path stroke="#666" stroke-width="1.6" d="M1849.8 127.5 L1857.1 120 L1864.4 127.5"/>
<g stroke="#0d6efd" stroke-width="1.6"><circle cx="897.6" cy="211.6" r="7"/><path d="M902.8 216.8 L908.2 221.6"/></g>
<g stroke="#0d6efd" stroke-width="1.6"><path d="M941.4 212.8 Q946.0 206.1 951.6 206.1 Q957.2 206.1 961.8 212.8 Q957.2 219.5 951.6 219.5 Q946.0 219.5 941.4 212.8 Z"/><circle cx="951.6" cy="212.8" r="3.5"/></g>
<path stroke="#777" stroke-width="1.5" d="M1244.9 171.4 H1259.5 M1253.9 165.8 L1259.5 171.4 L1253.9 177"/>
<path stroke="#777" stroke-width="1.5" d="M1427.6 171.4 H1442.2 M1436.6 165.8 L1442.2 171.4 L1436.6 177"/>
<path stroke="#777" stroke-width="1.5" d="M1577.4 171.4 H1592.0 M1586.4 165.8 L1592.0 171.4 L1586.4 177"/>
<path stroke="#5a5a5a" stroke-width="1.4" d="M568.6 260.9 L575 254.5 L581.4 260.9"/>
<g transform="translate(464.6 263.8) rotate(-41)" stroke="#fff" stroke-width="1.4"><path d="M0 0 L5.2 -3.3 H21.6 V3.3 H5.2 Z M5.2 -3.3 V3.3 M17.4 -3.3 V3.3 M5.2 0 H17.4"/></g>
<rect x="522.8" y="251.6" width="17.2" height="12.6" rx="1.2" fill="#bbb"/>
<path stroke="#bbb" stroke-width="1.6" d="M527.6 251.8 V249.2 a3.9 3.9 0 0 1 7.6 -1.2"/>
<g stroke="#0d6efd" stroke-width="1.6"><path d="M941.3 255.8 Q945.9 249.1 951.5 249.1 Q957.1 249.1 961.7 255.8 Q957.1 262.5 951.5 262.5 Q945.9 262.5 941.3 255.8 Z"/><circle cx="951.5" cy="255.8" r="3.5"/></g>
<g stroke="#0d6efd" stroke-width="1.5"><circle cx="996.6" cy="255.8" r="8.7"/><path d="M995 254.9 H996.9 V261.0"/></g><circle cx="996.5" cy="251.4" r="1.1" fill="#0d6efd"/>
<g stroke="#0d6efd" stroke-width="1.5"><path d="M1033.6 251.6 V248.0 H1037.2 M1045.8 248.0 H1049.4 V251.6 M1033.6 260.2 V263.8 H1037.2 M1045.8 263.8 H1049.4 V260.2"/><circle cx="1041.5" cy="253.9" r="2.7"/><path d="M1036.6 260.4 Q1041.5 255.0 1046.4 260.4"/></g>
<g stroke="#0d6efd" stroke-width="1.5"><path d="M1086.4 265.0 C1081 260.8 1079.6 256.8 1079.6 253.6 a6.8 6.8 0 0 1 13.6 0 C1093.2 256.8 1091.8 260.8 1086.4 265.0 Z M1079.8 265.2 H1093.2"/><circle cx="1086.4" cy="253.7" r="2.7"/></g>
<g stroke="#bdbdbd" stroke-width="1.5"><rect x="1124" y="248.6" width="15.4" height="15.2" rx="1.4"/><path d="M1124 252.4 H1139.4 M1127.6 246.6 V249.6 M1135.8 246.6 V249.6"/></g>
<g transform="translate(464.6 306.8) rotate(-41)" stroke="#fff" stroke-width="1.4"><path d="M0 0 L5.2 -3.3 H21.6 V3.3 H5.2 Z M5.2 -3.3 V3.3 M17.4 -3.3 V3.3 M5.2 0 H17.4"/></g>
<rect x="522.8" y="294.6" width="17.2" height="12.6" rx="1.2" fill="#bbb"/>
<path stroke="#bbb" stroke-width="1.6" d="M527.6 294.8 V292.2 a3.9 3.9 0 0 1 7.6 -1.2"/>
<g stroke="#0d6efd" stroke-width="1.6"><path d="M941.3 298.8 Q945.9 292.1 951.5 292.1 Q957.1 292.1 961.7 298.8 Q957.1 305.5 951.5 305.5 Q945.9 305.5 941.3 298.8 Z"/><circle cx="951.5" cy="298.8" r="3.5"/></g>
<g stroke="#0d6efd" stroke-width="1.5"><circle cx="996.6" cy="298.8" r="8.7"/><path d="M995 297.9 H996.9 V304.0"/></g><circle cx="996.5" cy="294.4" r="1.1" fill="#0d6efd"/>
<g stroke="#0d6efd" stroke-width="1.5"><path d="M1033.6 294.6 V291.0 H1037.2 M1045.8 291.0 H1049.4 V294.6 M1033.6 303.2 V306.8 H1037.2 M1045.8 306.8 H1049.4 V303.2"/><circle cx="1041.5" cy="296.9" r="2.7"/><path d="M1036.6 303.4 Q1041.5 298.0 1046.4 303.4"/></g>
<g stroke="#0d6efd" stroke-width="1.5"><path d="M1086.4 308.0 C1081 303.8 1079.6 299.8 1079.6 296.6 a6.8 6.8 0 0 1 13.6 0 C1093.2 299.8 1091.8 303.8 1086.4 308.0 Z M1079.8 308.2 H1093.2"/><circle cx="1086.4" cy="296.7" r="2.7"/></g>
<g stroke="#bdbdbd" stroke-width="1.5"><rect x="1124" y="291.6" width="15.4" height="15.2" rx="1.4"/><path d="M1124 295.4 H1139.4 M1127.6 289.6 V292.6 M1135.8 289.6 V292.6"/></g>
<g transform="translate(464.6 348.8) rotate(-41)" stroke="#fff" stroke-width="1.4"><path d="M0 0 L5.2 -3.3 H21.6 V3.3 H5.2 Z M5.2 -3.3 V3.3 M17.4 -3.3 V3.3 M5.2 0 H17.4"/></g>
<rect x="522.8" y="336.6" width="17.2" height="12.6" rx="1.2" fill="#bbb"/>
<path stroke="#bbb" stroke-width="1.6" d="M527.6 336.8 V334.2 a3.9 3.9 0 0 1 7.6 -1.2"/>
<g stroke="#0d6efd" stroke-width="1.6"><path d="M941.3 340.8 Q945.9 334.1 951.5 334.1 Q957.1 334.1 961.7 340.8 Q957.1 347.5 951.5 347.5 Q945.9 347.5 941.3 340.8 Z"/><circle cx="951.5" cy="340.8" r="3.5"/></g>
<g stroke="#0d6efd" stroke-width="1.5"><circle cx="996.6" cy="340.8" r="8.7"/><path d="M995 339.9 H996.9 V346.0"/></g><circle cx="996.5" cy="336.4" r="1.1" fill="#0d6efd"/>
<g stroke="#0d6efd" stroke-width="1.5"><path d="M1033.6 336.6 V333.0 H1037.2 M1045.8 333.0 H1049.4 V336.6 M1033.6 345.2 V348.8 H1037.2 M1045.8 348.8 H1049.4 V345.2"/><circle cx="1041.5" cy="338.9" r="2.7"/><path d="M1036.6 345.4 Q1041.5 340.0 1046.4 345.4"/></g>
<g stroke="#0d6efd" stroke-width="1.5"><path d="M1086.4 350.0 C1081 345.8 1079.6 341.8 1079.6 338.6 a6.8 6.8 0 0 1 13.6 0 C1093.2 341.8 1091.8 345.8 1086.4 350.0 Z M1079.8 350.2 H1093.2"/><circle cx="1086.4" cy="338.7" r="2.7"/></g>
<g stroke="#bdbdbd" stroke-width="1.5"><rect x="1124" y="333.6" width="15.4" height="15.2" rx="1.4"/><path d="M1124 337.4 H1139.4 M1127.6 331.6 V334.6 M1135.8 331.6 V334.6"/></g>
<g transform="translate(464.6 391.8) rotate(-41)" stroke="#fff" stroke-width="1.4"><path d="M0 0 L5.2 -3.3 H21.6 V3.3 H5.2 Z M5.2 -3.3 V3.3 M17.4 -3.3 V3.3 M5.2 0 H17.4"/></g>
<rect x="522.8" y="379.6" width="17.2" height="12.6" rx="1.2" fill="#bbb"/>
<path stroke="#bbb" stroke-width="1.6" d="M527.6 379.8 V377.2 a3.9 3.9 0 0 1 7.6 -1.2"/>
<g stroke="#0d6efd" stroke-width="1.6"><path d="M941.3 383.8 Q945.9 377.1 951.5 377.1 Q957.1 377.1 961.7 383.8 Q957.1 390.5 951.5 390.5 Q945.9 390.5 941.3 383.8 Z"/><circle cx="951.5" cy="383.8" r="3.5"/></g>
<g stroke="#0d6efd" stroke-width="1.5"><circle cx="996.6" cy="383.8" r="8.7"/><path d="M995 382.9 H996.9 V389.0"/></g><circle cx="996.5" cy="379.4" r="1.1" fill="#0d6efd"/>
<g stroke="#0d6efd" stroke-width="1.5"><path d="M1033.6 379.6 V376.0 H1037.2 M1045.8 376.0 H1049.4 V379.6 M1033.6 388.2 V391.8 H1037.2 M1045.8 391.8 H1049.4 V388.2"/><circle cx="1041.5" cy="381.9" r="2.7"/><path d="M1036.6 388.4 Q1041.5 383.0 1046.4 388.4"/></g>
<g stroke="#0d6efd" stroke-width="1.5"><path d="M1086.4 393.0 C1081 388.8 1079.6 384.8 1079.6 381.6 a6.8 6.8 0 0 1 13.6 0 C1093.2 384.8 1091.8 388.8 1086.4 393.0 Z M1079.8 393.2 H1093.2"/><circle cx="1086.4" cy="381.7" r="2.7"/></g>
<g stroke="#bdbdbd" stroke-width="1.5"><rect x="1124" y="376.6" width="15.4" height="15.2" rx="1.4"/><path d="M1124 380.4 H1139.4 M1127.6 374.6 V377.6 M1135.8 374.6 V377.6"/></g>
<g transform="translate(464.6 433.8) rotate(-41)" stroke="#fff" stroke-width="1.4"><path d="M0 0 L5.2 -3.3 H21.6 V3.3 H5.2 Z M5.2 -3.3 V3.3 M17.4 -3.3 V3.3 M5.2 0 H17.4"/></g>
<rect x="522.8" y="421.6" width="17.2" height="12.6" rx="1.2" fill="#bbb"/>
<path stroke="#bbb" stroke-width="1.6" d="M527.6 421.8 V419.2 a3.9 3.9 0 0 1 7.6 -1.2"/>
<g stroke="#0d6efd" stroke-width="1.6"><path d="M941.3 425.8 Q945.9 419.1 951.5 419.1 Q957.1 419.1 961.7 425.8 Q957.1 432.5 951.5 432.5 Q945.9 432.5 941.3 425.8 Z"/><circle cx="951.5" cy="425.8" r="3.5"/></g>
<g stroke="#0d6efd" stroke-width="1.5"><circle cx="996.6" cy="425.8" r="8.7"/><path d="M995 424.9 H996.9 V431.0"/></g><circle cx="996.5" cy="421.4" r="1.1" fill="#0d6efd"/>
<g stroke="#0d6efd" stroke-width="1.5"><path d="M1033.6 421.6 V418.0 H1037.2 M1045.8 418.0 H1049.4 V421.6 M1033.6 430.2 V433.8 H1037.2 M1045.8 433.8 H1049.4 V430.2"/><circle cx="1041.5" cy="423.9" r="2.7"/><path d="M1036.6 430.4 Q1041.5 425.0 1046.4 430.4"/></g>
<g stroke="#0d6efd" stroke-width="1.5"><path d="M1086.4 435.0 C1081 430.8 1079.6 426.8 1079.6 423.6 a6.8 6.8 0 0 1 13.6 0 C1093.2 426.8 1091.8 430.8 1086.4 435.0 Z M1079.8 435.2 H1093.2"/><circle cx="1086.4" cy="423.7" r="2.7"/></g>
<g stroke="#bdbdbd" stroke-width="1.5"><rect x="1124" y="418.6" width="15.4" height="15.2" rx="1.4"/><path d="M1124 422.4 H1139.4 M1127.6 416.6 V419.6 M1135.8 416.6 V419.6"/></g>
</svg>
</body></html>
